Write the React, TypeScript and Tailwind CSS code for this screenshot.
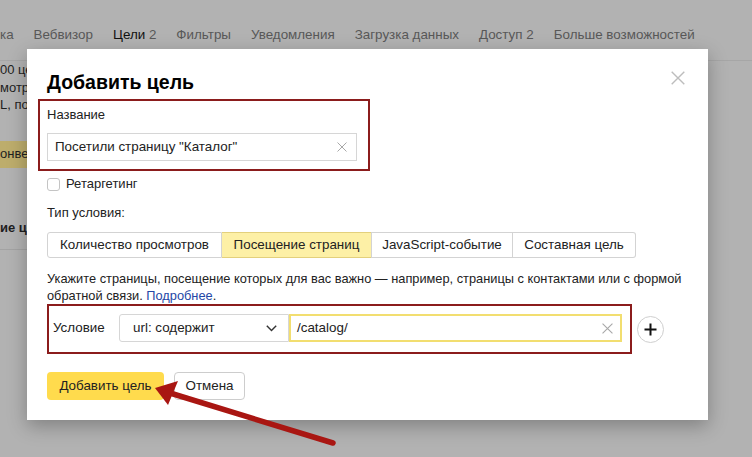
import React from "react";

const F = { fontFamily: '"Liberation Sans", Arial, sans-serif' };

function ClearX({ size = 10, color = "#a8a8a8" }: { size?: number; color?: string }) {
  return (
    <svg width={size} height={size} viewBox="0 0 10 10">
      <path d="M0.5 0.5 L9.5 9.5 M9.5 0.5 L0.5 9.5" stroke={color} strokeWidth="1" fill="none" />
    </svg>
  );
}

export default function App() {
  return (
    <div
      className="relative w-[752px] h-[457px] overflow-hidden bg-[#b2b2b2] text-[#222]"
      style={F}
    >
      {/* background page */}
      <div className="flex flex-col">
        <div className="h-[61px] flex items-end pb-[16px] border-b border-[#a6a6a6] text-[13.4px] leading-[18px] text-[#585858]">
          <div className="flex gap-[20px] whitespace-nowrap">
            <span>ка</span>
            <span>Вебвизор</span>
            <span>
              <span className="text-[#111]">Цели</span> 2
            </span>
            <span>Фильтры</span>
            <span>Уведомления</span>
            <span>Загрузка данных</span>
            <span>Доступ 2</span>
            <span>Больше возможностей</span>
          </div>
        </div>
        <div className="flex flex-col text-[13px] leading-[17.5px] text-[#1e1e1e] whitespace-nowrap">
          <div>00 целей</div>
          <div>мотров</div>
          <div>L, по</div>
          <div className="mt-[27px] h-[27px] w-[60px] bg-[#bdad6c] flex items-center">онве</div>
          <div className="mt-[51px] font-bold">ие цели</div>
          <div className="mt-[13px] h-px w-[60px] bg-[#a3a3a3]" />
        </div>
      </div>

      {/* dialog */}
      <div className="absolute left-[27px] top-[49px] w-[681px] h-[371px] bg-white shadow-[0_6px_18px_rgba(0,0,0,0.28)] pl-[20px] pt-[21px] flex flex-col">
        <div className="absolute right-[23px] top-[22px]">
          <ClearX size={14} color="#bdbdbd" />
        </div>

        <div className="text-[19.5px] leading-[24px] font-bold text-black">Добавить цель</div>

        {/* Name box */}
        <div className="mt-[5px] -ml-[9px] w-[332px] border-2 border-[#8b1c1c] pl-[7px] pt-[6px] pb-[8px]">
          <div className="text-[13px] leading-[16px]">Название</div>
          <div className="mt-[10px] w-[310px] h-[28px] border border-[#d6d6d6] flex items-center pl-[7px] pr-[9px] justify-between">
            <span className="text-[13.4px]">Посетили страницу "Каталог"</span>
            <ClearX />
          </div>
        </div>

        {/* checkbox */}
        <div className="mt-[5px] flex items-center h-[16px]">
          <div className="w-[13px] h-[13px] border border-[#c4c4c4] rounded-[3px] bg-white" />
          <span className="ml-[6px] text-[13px] leading-[16px]">Ретаргетинг</span>
        </div>

        <div className="mt-[13px] text-[13px] leading-[16px]">Тип условия:</div>

        {/* type tabs */}
        <div className="mt-[11px] flex h-[26px] text-[13.4px]">
          <div className="w-[175px] border border-[#d3d3d3] rounded-l-[3px] flex items-center justify-center">
            Количество просмотров
          </div>
          <div className="w-[149px] border-y border-[#e3d07c] bg-[#fdf0a6] flex items-center justify-center">
            Посещение страниц
          </div>
          <div className="w-[142px] border border-[#d3d3d3] flex items-center justify-center">
            JavaScript-событие
          </div>
          <div className="w-[123px] border-y border-r border-[#d3d3d3] rounded-r-[3px] flex items-center justify-center">
            Составная цель
          </div>
        </div>

        <div className="mt-[12px] w-[660px] text-[12.8px] leading-[17px]">
          <div className="whitespace-nowrap">
            Укажите страницы, посещение которых для вас важно — например, страницы с контактами или с формой
          </div>
          <div>
            обратной связи. <span className="text-[#2447a6]">Подробнее</span>.
          </div>
        </div>

        {/* condition row */}
        <div className="flex items-center">
          <div className="w-[585px] h-[50px] border-2 border-[#8b1c1c] flex items-center pl-[4px] pb-[2px]">
            <span className="w-[66px] text-[13.4px]">Условие</span>
            <div className="w-[170px] h-[28px] border border-[#d6d6d6] rounded-l-[3px] flex items-center justify-between pl-[13px] pr-[11px] text-[13.4px]">
              <span>url: содержит</span>
              <svg width="11" height="7" viewBox="0 0 11 7">
                <path d="M0.8 0.8 L5.5 5.6 L10.2 0.8" stroke="#333" strokeWidth="1.4" fill="none" />
              </svg>
            </div>
            <div className="w-[333px] h-[28px] border-2 border-[#f2de70] flex items-center justify-between pl-[6px] pr-[7px] text-[13.4px]">
              <span>/catalog/</span>
              <ClearX size={11} />
            </div>
          </div>
          <div className="ml-[5px] w-[27px] h-[27px] rounded-full border border-[#cfcfcf] flex items-center justify-center">
            <svg width="13" height="13" viewBox="0 0 13 13">
              <path d="M6.5 0.5 V12.5 M0.5 6.5 H12.5" stroke="#111" strokeWidth="2" fill="none" />
            </svg>
          </div>
        </div>

        {/* buttons */}
        <div className="mt-[18px] flex gap-[10px] text-[13.4px]">
          <div className="w-[117px] h-[28px] rounded-[4px] bg-[#ffdb4d] flex items-center justify-center">
            Добавить цель
          </div>
          <div className="w-[71px] h-[28px] rounded-[4px] border border-[#cdcdcd] bg-white flex items-center justify-center">
            Отмена
          </div>
        </div>
      </div>

      {/* annotation arrow */}
      <svg className="absolute left-0 top-0" width="752" height="457" viewBox="0 0 752 457">
        <line x1="333" y1="443" x2="170" y2="393" stroke="#a91612" strokeWidth="5.5" strokeLinecap="round" />
        <polygon points="155,388 168,405 178,381" fill="#a91612" />
      </svg>
    </div>
  );
}
